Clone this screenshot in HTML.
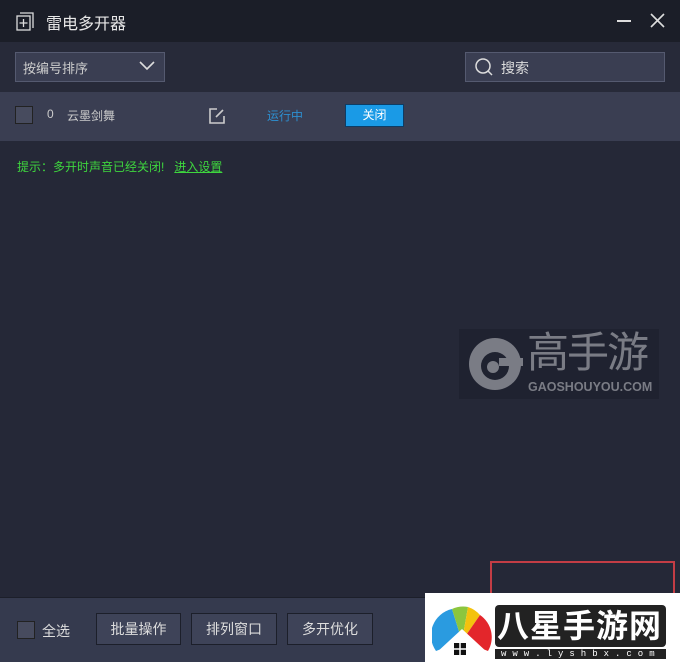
<!DOCTYPE html>
<html><head><meta charset="utf-8"><style>
*{margin:0;padding:0;box-sizing:border-box}
body{width:680px;height:662px;overflow:hidden;background:#252837;font-family:"Liberation Sans","Noto Sans CJK SC",sans-serif;position:relative;color:#ddd}
.a{position:absolute}
</style></head><body>
<div class="a" style="left:0;top:0;width:680px;height:42px;background:#1b1e28"></div>
<svg class="a" style="left:15px;top:10px" width="22" height="22" viewBox="0 0 22 22"><path d="M5 3h13v15" fill="none" stroke="#ddd" stroke-width="1.3"/><rect x="2" y="6" width="13" height="14" fill="none" stroke="#ddd" stroke-width="1.3"/><path d="M8.5 9v8M4.5 13h8" stroke="#ddd" stroke-width="1.3"/></svg>
<div class="a" style="left:46px;top:10px;font-size:16px;color:#e8e8e8">雷电多开器</div>
<div class="a" style="left:617px;top:20px;width:14px;height:2px;background:#ddd"></div>
<svg class="a" style="left:650px;top:13px" width="15" height="15"><path d="M1 1L14 14M14 1L1 14" stroke="#ddd" stroke-width="1.6"/></svg>
<div class="a" style="left:0;top:42px;width:680px;height:50px;background:#272a39"></div>
<div class="a" style="left:15px;top:52px;width:150px;height:30px;background:#3a3e52;border:1px solid #555a70"></div>
<div class="a" style="left:23px;top:58px;font-size:13px;color:#ccc">按编号排序</div>
<svg class="a" style="left:139px;top:60px" width="16" height="12"><path d="M1 2l7 7 7-7" fill="none" stroke="#ddd" stroke-width="1.6"/></svg>
<div class="a" style="left:465px;top:52px;width:200px;height:30px;background:#3a3e52;border:1px solid #555a70"></div>
<svg class="a" style="left:474px;top:57px" width="20" height="20"><circle cx="9" cy="9" r="7" fill="none" stroke="#ddd" stroke-width="1.5"/><path d="M14 14l4 4" stroke="#ddd" stroke-width="1.5"/></svg>
<div class="a" style="left:501px;top:58px;font-size:14px;color:#ddd">搜索</div>
<div class="a" style="left:0;top:92px;width:680px;height:49px;background:#3a3e52"></div>
<div class="a" style="left:15px;top:106px;width:18px;height:18px;background:#474b5e;border:1px solid #222"></div>
<div class="a" style="left:47px;top:107px;font-size:12px;color:#ccc">0</div>
<div class="a" style="left:67px;top:107px;font-size:12px;color:#ccc">云墨剑舞</div>
<svg class="a" style="left:207px;top:106px" width="20" height="20"><path d="M10 3H3v14h14v-7" fill="none" stroke="#ccc" stroke-width="1.6"/><path d="M9 11l7-7" stroke="#ccc" stroke-width="1.6"/></svg>
<div class="a" style="left:267px;top:107px;font-size:12px;color:#2d8fd0">运行中</div>
<div class="a" style="left:345px;top:104px;width:59px;height:23px;background:#1a9ae6;border:1px solid #0c3d66;color:#fff;font-size:12px;text-align:center;line-height:21px">关闭</div>
<div class="a" style="left:17px;top:158px;font-size:12px;color:#3ed63e">提示：多开时声音已经关闭!&nbsp;&nbsp;&nbsp;<span style="text-decoration:underline">进入设置</span></div>
<div class="a" style="left:459px;top:329px;width:200px;height:70px;background:#1f2230"></div>
<svg class="a" style="left:465px;top:334px" width="60" height="60"><circle cx="30" cy="30" r="26" fill="#7a7c85"/><circle cx="30" cy="32" r="14" fill="#1f2230"/><rect x="34" y="24" width="24" height="8" fill="#7a7c85"/><circle cx="28" cy="33" r="6" fill="#7a7c85"/></svg>
<div class="a" style="left:527px;top:330px;font-size:42px;line-height:46px;color:#7a7c85;letter-spacing:-2px">高手游</div>
<div class="a" style="left:528px;top:380px;font-size:12.5px;font-weight:bold;color:#7a7c85">GAOSHOUYOU.COM</div>
<div class="a" style="left:0;top:597px;width:680px;height:65px;background:#353a4e;border-top:1px solid #1c1f2a"></div>
<div class="a" style="left:17px;top:621px;width:18px;height:18px;background:#474b5e;border:1px solid #222"></div>
<div class="a" style="left:42px;top:621px;font-size:14px;color:#ddd">全选</div>
<div class="a" style="left:96px;top:613px;width:85px;height:32px;background:#3e4358;border:1px solid #1c1f2a;font-size:14px;text-align:center;line-height:30px">批量操作</div>
<div class="a" style="left:191px;top:613px;width:86px;height:32px;background:#3e4358;border:1px solid #1c1f2a;font-size:14px;text-align:center;line-height:30px">排列窗口</div>
<div class="a" style="left:287px;top:613px;width:86px;height:32px;background:#3e4358;border:1px solid #1c1f2a;font-size:14px;text-align:center;line-height:30px">多开优化</div>
<div class="a" style="left:490px;top:561px;width:185px;height:40px;border:2px solid #c33d45;border-bottom:none"></div>
<div class="a" style="left:425px;top:593px;width:255px;height:69px;background:#fff"></div>
<svg class="a" style="left:432px;top:601px" width="60" height="61"><path d="M4 50A27 27 0 0 1 20 8L30 40Z" fill="#2a9be0"/><path d="M20 8A27 27 0 0 1 36 6L30 40Z" fill="#8cc63e"/><path d="M36 6A27 27 0 0 1 48 14L30 40Z" fill="#f4c20d"/><path d="M48 14A27 27 0 0 1 56 50L30 40Z" fill="#e3262b"/><path d="M4 52L30 28L56 52" fill="#fff"/><rect x="22" y="42" width="12" height="12" fill="#111"/><path d="M28 42v12M22 48h12" stroke="#fff" stroke-width="1.5"/></svg>
<div class="a" style="left:495px;top:605px;width:171px;height:42px;background:#222;border-radius:4px"></div>
<div class="a" style="left:497px;top:605px;font-size:32px;line-height:42px;color:#fff;font-weight:bold;letter-spacing:1px">八星手游网</div>
<div class="a" style="left:495px;top:649px;width:171px;height:10px;background:#222;color:#fff;font-size:9px;line-height:10px;letter-spacing:6px;padding-left:6px;font-family:'Liberation Mono',monospace;overflow:hidden;white-space:nowrap">www.lyshbx.com</div>
</body></html>
